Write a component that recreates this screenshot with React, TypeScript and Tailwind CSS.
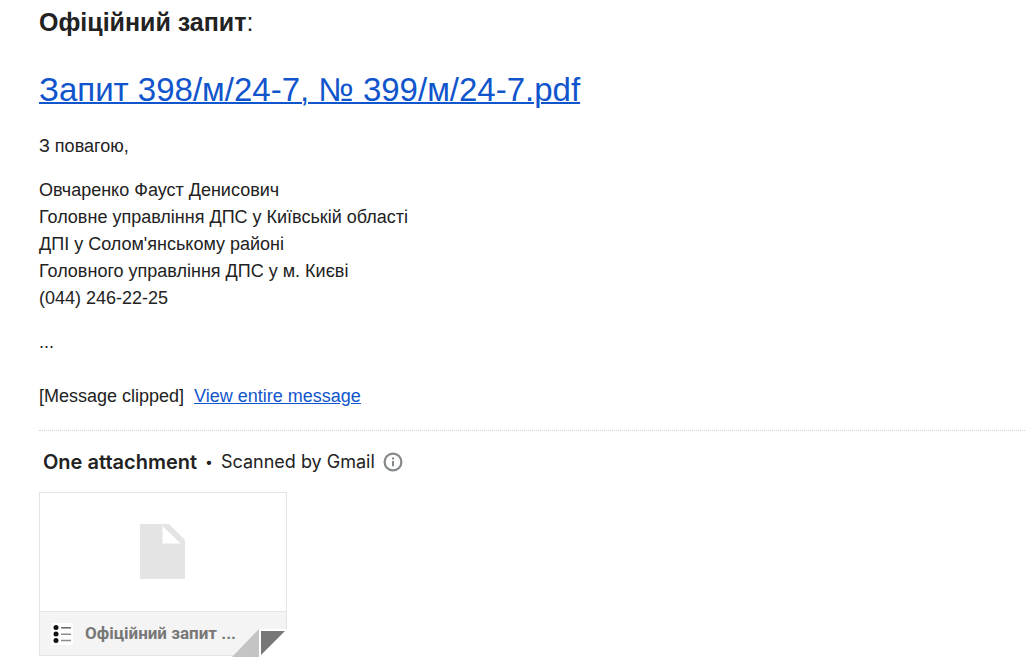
import React from "react";

const signature = [
  "Овчаренко Фауст Денисович",
  "Головне управління ДПС у Київській області",
  "ДПІ у Солом'янському районі",
  "Головного управління ДПС у м. Києві",
  "(044) 246-22-25",
];

function InfoIcon() {
  return (
    <svg className="h-5 w-5" viewBox="0 0 20 20" fill="none" aria-hidden="true">
      <circle cx="10" cy="10" r="8.4" stroke="#85888a" strokeWidth="2.2" />
      <path d="M10 9v5.2M10 5.6v2" stroke="#85888a" strokeWidth="2" />
    </svg>
  );
}

function FileIcon() {
  return (
    <svg className="h-[55px] w-[45px]" viewBox="0 0 45 55" aria-hidden="true">
      <path d="M0 0h29l16 16v39H0z" fill="#e4e4e4" />
      <path d="M22.5 2v17.5h18z" fill="#fff" />
    </svg>
  );
}

function ListIcon() {
  return (
    <svg className="h-[22px] w-[22px] shrink-0" viewBox="0 0 22 22" aria-hidden="true">
      <path d="M0 0h22v22H0z" fill="#fff" />
      <g fill="#111">
        <circle cx="5" cy="4.5" r="2.5" />
        <circle cx="5" cy="11" r="2.5" />
        <circle cx="5" cy="17.5" r="2.5" />
      </g>
      <path d="M10 4.8h10" stroke="#666" strokeWidth="1.5" />
      <path d="M10 11.3h10M10 17.5h10" stroke="#8c8c8c" strokeWidth="1.5" />
    </svg>
  );
}

// Folded corner in the bottom right of the attachment card
function Fold() {
  return (
    <svg
      className="absolute -right-px -bottom-0.5 h-[29px] w-[55px]"
      viewBox="0 0 55 29"
      aria-hidden="true"
    >
      <path d="M27 1h28v28H27z" fill="#fff" />
      <path d="M0 29L27 1v28z" fill="#c4c4c4" />
      <path d="M29 3h24L29 27z" fill="#777" />
    </svg>
  );
}

function Attachment() {
  return (
    <a
      href="#attachment"
      className="relative block w-[248px] border border-[#e4e4e4] bg-white"
    >
      <div className="flex h-[118px] items-center justify-center pr-0.5 pb-0.5">
        <FileIcon />
      </div>
      <div className="flex h-11 items-center gap-3 border-t border-[#e4e4e4] bg-[#f4f4f4] px-[11px] font-[Roboto,sans-serif] text-[17px] font-bold text-[#777]">
        <ListIcon />
        <span className="whitespace-nowrap">Офіційний запит ...</span>
      </div>
      <Fold />
    </a>
  );
}

function App() {
  return (
    <main className="bg-white pt-1 pb-3 pl-[39px] font-['Liberation_Sans',Arial,sans-serif] text-lg leading-[27px] text-[#222]">
      <p className="text-[25px] leading-9">
        <strong>Офіційний запит</strong>:
      </p>
      <p className="mt-6 text-[33px] leading-[52px]">
        <a href="#request" className="text-[#1155cc] underline decoration-2">
          Запит 398/м/24-7, № 399/м/24-7.pdf
        </a>
      </p>
      <p className="mt-[17px]">З повагою,</p>
      <p className="mt-[17px]">
        {signature.map((line) => (
          <span key={line} className="block">
            {line}
          </span>
        ))}
      </p>
      <p className="mt-[17px]">...</p>
      <p className="mt-[27px]">
        [Message clipped]&nbsp;{" "}
        <a href="#message" className="text-[#1155cc] underline">
          View entire message
        </a>
      </p>

      <section className="mt-5 border-t border-dotted border-[#d0d0d0] pt-4">
        <div className="flex items-center pl-1 font-[Inter,sans-serif] text-lg leading-[30px]">
          <h2 className="text-[20px] leading-[30px] font-semibold">One attachment</h2>
          <span className="mx-2 text-sm leading-[30px]">•</span>
          <span>Scanned by Gmail</span>
          <button type="button" aria-label="About attachment scanning" className="ml-2">
            <InfoIcon />
          </button>
        </div>
        <div className="mt-[15px]">
          <Attachment />
        </div>
      </section>
    </main>
  );
}

export default App;
